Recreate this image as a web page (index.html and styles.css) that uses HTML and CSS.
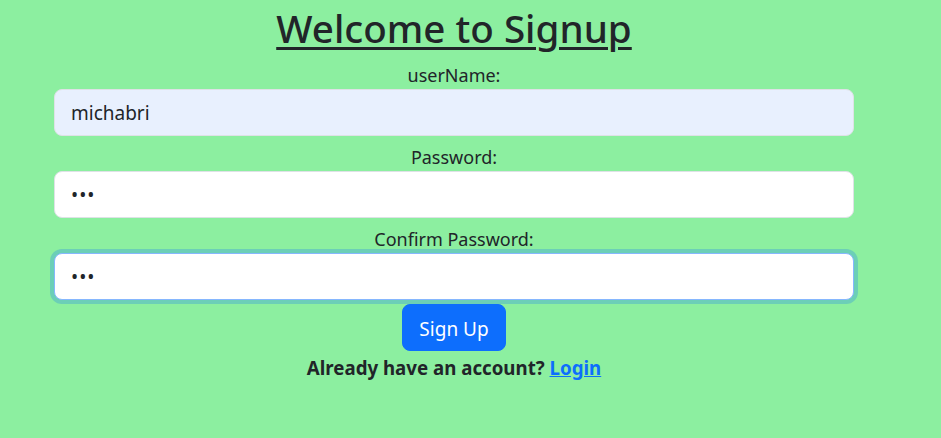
FILE: index.html
```html
<!DOCTYPE html>
<html lang="en">
<head>
<meta charset="utf-8">
<title>Signup</title>
<link rel="stylesheet" href="styles.css">
</head>
<body>
<main class="page">
  <h1 class="title">Welcome to Signup</h1>
  <form class="form">
    <label class="label" for="u">userName:</label>
    <input class="field autofill" id="u" type="text" value="michabri">
    <label class="label" for="p">Password:</label>
    <input class="field" id="p" type="password" value="abc">
    <label class="label" for="c">Confirm Password:</label>
    <input class="field focused" id="c" type="password" value="abc">
    <button class="btn" type="button">Sign Up</button>
    <p class="login">Already have an account? <a href="#" class="link">Login</a></p>
  </form>
</main>
</body>
</html>
```

FILE: styles.css
```css
* { box-sizing: border-box; }
html, body { margin: 0; padding: 0; }
body {
  background: #8cefa0;
  color: #212529;
  font-family: "Noto Sans", "Open Sans", sans-serif;
  font-size: 16px;
  line-height: 1.5;
  height: 438px;
}
.page {
  width: 908px;
  text-align: center;
}
.title {
  margin: 0;
  padding-top: 5px;
  font-size: 38.6px;
  font-weight: 500;
  line-height: 1.2;
  text-decoration: underline;
  text-decoration-thickness: 3px;
  text-underline-offset: 4px;
}
.form {
  display: flex;
  flex-direction: column;
  align-items: center;
  margin-top: 10px;
}
.label {
  display: block;
  font-size: 18px;
  line-height: 28px;
}
.field {
  display: block;
  width: 800px;
  height: 47px;
  padding: 8px 16px;
  font-family: inherit;
  font-size: 19px;
  color: #212529;
  background: #fff;
  border: 1px solid #dee2e6;
  border-radius: 8px;
  margin-bottom: 7px;
  outline: none;
}
.field[type="password"] { letter-spacing: 1px; }
.autofill { background: #e8f0fe; }
.focused {
  border-color: #86b7fe;
  box-shadow: 0 0 0 4px rgba(13, 110, 253, 0.25);
  margin-bottom: 4px;
}
.btn {
  font-family: inherit;
  font-size: 19px;
  line-height: 1.5;
  color: #fff;
  background: #0d6efd;
  border: 1px solid #0d6efd;
  border-radius: 8px;
  padding: 9px 16px 7px;
  height: 47px;
  cursor: pointer;
}
.login {
  margin: 2px 0 0;
  font-size: 18.7px;
  font-weight: 700;
  line-height: 30px;
}
.link {
  color: #0d6efd;
  text-decoration: underline;
}
```
